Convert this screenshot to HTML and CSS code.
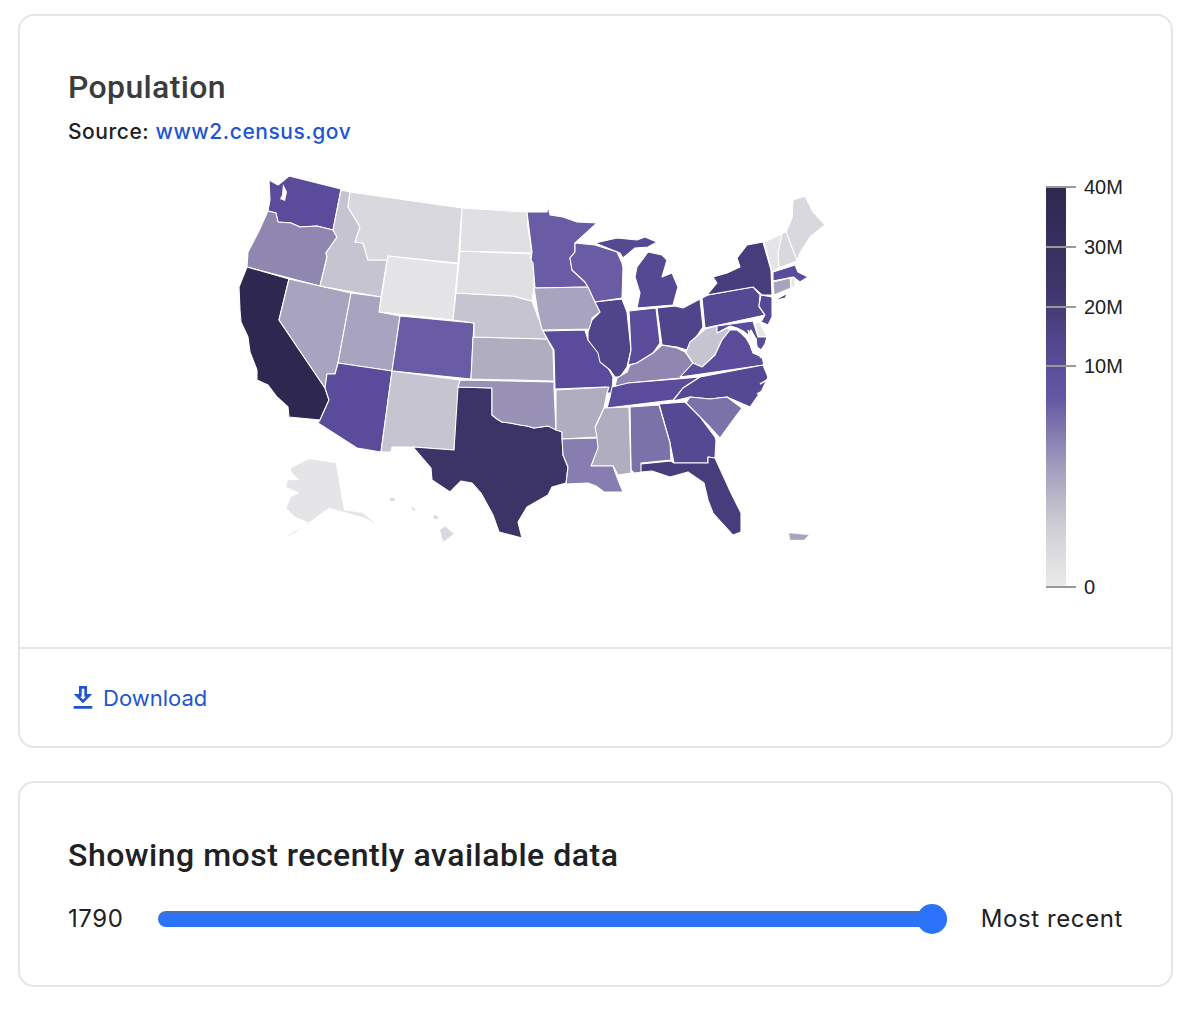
FILE: index.html
```html
<!DOCTYPE html>
<html lang="en">
<head>
<meta charset="utf-8">
<title>Population</title>
<link rel="stylesheet" href="styles.css">
</head>
<body>
<main class="page">
  <section class="card">
    <div class="card-body">
      <h2 class="title">Population</h2>
      <p class="source">Source: <a href="#" class="link">www2.census.gov</a></p>
      <div class="chart">
        <svg class="map" viewBox="220 170 620 380" width="620" height="380" aria-label="US population map">
          <g class="states">
            <polygon class="l5" points="269,180 278,185 289,176 341,189 333,230 317,226 300,227 291,223 278,222 276,213 268,211 270,200"/>
            <polygon class="l9" points="268,211 276,213 278,222 291,223 300,227 317,226 333,230 337,237 326,253 327,257 320,286 247,267 248,252 258,233"/>
            <polygon class="l0" points="247,267 289,279 279,320 325,388 329,400 320,420 289,417 288,407 277,397 268,385 257,380 257,370 250,352 248,337 241,322 240,310 239,287"/>
            <polygon class="l11" points="289,279 351,293 338,363 335,374 327,374 325,388 279,320"/>
            <polygon class="l13" points="341,190 350,192 348,207 360,227 355,242 363,243 368,260 387,260 381,297 320,286 327,257 326,253 337,237 333,230"/>
            <polygon class="l14" points="350,192 462,208 458,263 388,256 387,260 368,260 363,243 355,242 360,227 348,207"/>
            <polygon class="l16" points="388,256 458,264 453,320 379,312"/>
            <polygon class="l11" points="351,293 381,297 379,312 400,316 392,371 338,363"/>
            <polygon class="l6" points="400,316 474,323 471,379 392,371"/>
            <polygon class="l5" points="338,363 392,371 381,452 357,448 318,423 320,420 329,400 325,388 327,374 335,374"/>
            <polygon class="l13" points="392,371 460,380 454,450 413,447 392,447 391,452 381,452"/>
            <polygon class="l1" points="458,387 492,388 492,415 497,419 502,422 510,423 520,425 527,426 534,428 541,427 548,426 555,428 562,432 563,455 568,467 566,483 559,485 552,487 548,495 527,507 518,522 522,538 499,532 493,515 481,493 472,483 461,481 450,492 432,480 431,468 413,447 454,450"/>
            <polygon class="l10" points="460,380 554,382 554,388 556,430 548,426 541,427 534,428 527,426 520,425 510,423 502,422 497,419 492,415 492,388 458,387"/>
            <polygon class="l12" points="473,337 547,339 553,350 554,381 471,379"/>
            <polygon class="l13" points="456,293 513,296 520,298 532,301 538,317 547,339 474,337 474,323 453,320"/>
            <polygon class="l15" points="460,251 532,254 530,258 534,263 534,288 532,301 520,298 513,296 456,293"/>
            <polygon class="l15" points="462,208 527,212 528,228 532,253 460,251"/>
            <polygon class="l6" points="527,212 547,212 548,206 550,215 563,217 577,222 597,223 575,243 575,252 570,258 572,270 585,282 588,287 535,288 533,263 531,260 532,252"/>
            <polygon class="l11" points="534,288 588,287 600,312 592,318 592,329 542,330 538,313"/>
            <polygon class="l5" points="543,331 585,330 588,340 600,353 613,377 612,393 603,393 606,387 555,389 554,350 548,340"/>
            <polygon class="l6" points="575,243 595,245 617,252 622,263 623,268 622,298 595,302 588,287 585,282 572,270 570,258 575,252"/>
            <polygon class="l4" points="595,243 617,238 637,240 645,237 657,242 648,247 635,248 623,258 620,253"/>
            <polygon class="l4" points="648,252 662,255 667,260 662,277 672,273 678,287 673,305 637,308 640,293 635,277 637,267"/>
            <polygon class="l3" points="595,302 622,299 627,312 631,350 627,367 620,377 615,377 610,370 600,362 598,353 588,340 588,332 592,320 600,312"/>
            <polygon class="l5" points="629,311 656,308 660,343 653,353 637,363 628,365 631,350"/>
            <polygon class="l3" points="657,308 675,306 683,308 700,299 703,327 687,350 677,347 662,345"/>
            <polygon class="l9" points="662,345 677,348 685,352 693,363 680,378 628,383 627,385 615,386 617,378 627,372 630,365 637,363 653,353"/>
            <polygon class="l5" points="612,387 628,383 677,379 700,377 683,388 673,400 607,408 610,397"/>
            <polygon class="l13" points="705,329 717,326 717,333 727,328 730,330 722,340 715,355 702,367 693,363 686,352 690,342 702,332"/>
            <polygon class="l4" points="702,298 708,295 753,287 760,295 759,307 765,315 705,328"/>
            <polygon class="l2" points="707,295 717,283 713,277 727,273 740,267 737,258 747,245 763,242 771,270 772,295 762,295 753,287"/>
            <polygon class="l4" points="761,295 772,297 772,317 768,325 761,322 765,315 759,306"/>
            <polygon class="l16" points="755,322 760,323 767,337 758,337"/>
            <polygon class="l5" points="717,326 753,321 758,337 767,337 765,344 761,350 757,347 755,337 751,330 748,335 743,331 737,328 730,326 717,333"/>
            <polygon class="l5" points="730,330 737,330 742,334 746,338 750,345 753,353 762,357 764,365 680,377 693,363 702,367 715,355 722,340"/>
            <polygon class="l4" points="700,377 763,365 768,377 762,390 750,407 727,397 710,399 690,397 673,401 683,388"/>
            <polygon class="l7" points="686,403 690,397 710,399 727,397 742,408 733,420 720,438 710,427 700,417"/>
            <polygon class="l4" points="659,404 685,402 700,417 715,437 716,440 715,458 708,457 708,463 674,463 670,443"/>
            <polygon class="l7" points="630,407 659,405 670,443 671,460 641,463 643,472 634,473 631,470"/>
            <polygon class="l12" points="604,408 629,407 631,473 618,475 613,466 591,466 597,448 594,430"/>
            <polygon class="l12" points="556,390 609,387 607,393 604,408 595,427 597,437 562,439 562,432 556,430"/>
            <polygon class="l8" points="562,439 597,438 598,448 591,466 613,466 618,480 623,492 604,492 596,486 588,483 566,484 568,467 563,455"/>
            <polygon class="l2" points="641,464 671,461 674,463 708,463 708,457 715,458 731,493 741,513 741,532 733,535 722,523 713,513 708,500 704,483 688,472 670,477 652,471 641,472"/>
            <polygon class="l14" points="793,200 805,196 813,212 825,225 810,237 800,253 797,261 786,232 792,218"/>
            <polygon class="l14" points="782,233 786,232 797,261 779,268 778,253"/>
            <polygon class="l16" points="764,242 782,234 778,253 779,268 772,272"/>
            <polygon class="l5" points="773,272 795,265 798,272 808,277 800,282 793,277 773,281"/>
            <polygon class="l11" points="773,282 790,278 791,288 774,295"/>
            <polygon class="l16" points="791,278 795,278 795,286 791,288"/>
            <polygon class="l2" points="773,301 788,293 785,298"/>
          </g>
          <g class="outlying">
            <polygon class="l16" points="291,468 309,459 336,463 344,510 363,513 377,525 365,518 344,512 329,508 315,518 295,533 283,538 310,523 295,517 286,508 291,497 299,493 286,487 288,480 299,480 291,472"/>
            <polygon class="l14" points="440,530 445,526 454,534 443,542"/>
            <polygon class="l14" points="390,498 395,498 395,501 390,501"/>
            <polygon class="l14" points="411,506 416,510 413,511"/>
            <polygon class="l14" points="433,515 438,516 438,519 434,519"/>
            <polygon class="l11" points="789,533 809,535 804,540 790,540"/>
          </g>
          <path class="water" d="M283,184 L282,195 L280,199 L285,201 L287,192 Z"/>
          <path class="water-line" d="M748,330 L752,342 M756,338 L757,352 M760,358 L764,354 M767,380 L760,384 M763,391 L757,394"/>
        </svg>
        <svg class="legend" viewBox="0 0 90 430" width="90" height="430" aria-label="Legend">
          <defs>
            <linearGradient id="scale" x1="0" y1="0" x2="0" y2="1">
              <stop offset="0" stop-color="#2e2850"/>
              <stop offset="0.25" stop-color="#3f3569"/>
              <stop offset="0.45" stop-color="#5a4e9c"/>
              <stop offset="0.53" stop-color="#6558a3"/>
              <stop offset="0.7" stop-color="#a39dbd"/>
              <stop offset="0.85" stop-color="#cfced6"/>
              <stop offset="1" stop-color="#ebebeb"/>
            </linearGradient>
          </defs>
          <rect class="bar" x="6" y="17" width="20" height="400"/>
          <g class="ticks">
            <line x1="6" x2="36" y1="17" y2="17"/>
            <line x1="6" x2="36" y1="77" y2="77"/>
            <line x1="6" x2="36" y1="137" y2="137"/>
            <line x1="6" x2="36" y1="196" y2="196"/>
            <line x1="6" x2="36" y1="417" y2="417"/>
          </g>
          <g class="tick-labels">
            <text x="44" y="24">40M</text>
            <text x="44" y="84">30M</text>
            <text x="44" y="144">20M</text>
            <text x="44" y="203">10M</text>
            <text x="44" y="424">0</text>
          </g>
        </svg>
      </div>
    </div>
    <footer class="card-footer">
      <a href="#" class="download">
        <svg class="download-icon" viewBox="0 0 24 24" width="32" height="32"><path d="M19 9h-4V3H9v6H5l7 7 7-7zm-8 2V5h2v6h1.17L12 13.17 9.83 11H11zm-6 7h14v2H5v-2z"/></svg>
        <span>Download</span>
      </a>
    </footer>
  </section>
  <section class="card card-time">
    <h2 class="time-title">Showing most recently available data</h2>
    <div class="slider-row">
      <span class="slider-label">1790</span>
      <div class="slider"><span class="slider-fill"></span><span class="slider-thumb"></span></div>
      <span class="slider-label">Most recent</span>
    </div>
  </section>
</main>
</body>
</html>
```
FILE: styles.css
```css
* { box-sizing: border-box; }
html, body { margin: 0; background: #fff; }
body { font-family: Inter, "Liberation Sans", sans-serif; color: #202124; }
.page { display: flex; flex-direction: column; gap: 33px; padding: 14px 11px 0 18px; }
.card { border: 2px solid #e5e5e5; border-radius: 16px; background: #fff; }
.card-body { padding: 51px 48px 0; }
.title { margin: 0; font: 500 32px/40px Roboto, "Noto Sans", sans-serif; letter-spacing: 0.35px; color: #3c3c3c; }
.source { margin: 11px 0 0; font-size: 21px; line-height: 28px; font-weight: 500; letter-spacing: 0.55px; }
.link { color: #1f55d0; text-decoration: none; }
.chart { display: flex; justify-content: space-between; margin: 24px 0 0; padding-left: 152px; height: 477px; }
.map, .legend { display: block; flex: none; }
.legend { margin-right: -7px; margin-left: auto; }
.states polygon, .outlying polygon { stroke: #fff; stroke-width: 1.1; stroke-linejoin: round; }
.outlying polygon { stroke-width: 0.3; }
.water { fill: #fff; }
.water-line { fill: none; stroke: #fff; stroke-width: 1.5; }
.l0 { fill: #2e2750; } .l1 { fill: #3c3366; } .l2 { fill: #483d7c; } .l3 { fill: #50448b; }
.l4 { fill: #544992; } .l5 { fill: #5a4c9b; } .l6 { fill: #6a5ca4; } .l7 { fill: #7c72aa; }
.l8 { fill: #877db0; } .l9 { fill: #9087b0; } .l10 { fill: #9a92b6; } .l11 { fill: #a8a3be; }
.l12 { fill: #b0adc0; } .l13 { fill: #c6c4d0; } .l14 { fill: #d9d8de; } .l15 { fill: #e0e0e3; }
.l16 { fill: #e5e5e7; }
.bar { fill: url(#scale); }
.ticks line { stroke: #999; stroke-width: 2; }
.tick-labels text { font-family: "Liberation Sans", Arial, sans-serif; font-size: 20px; fill: #202124; }
.card-footer { border-top: 2px solid #e5e5e5; padding: 33px 44px 32px 47px; display: flex; }
.download { display: flex; align-items: center; gap: 4px; color: #1f55d0; text-decoration: none; font-size: 22px; line-height: 32px; }
.download-icon { fill: currentColor; display: block; }
.card-time { padding: 52px 48px; }
.time-title { margin: 0; font: 500 32px/40px Roboto, "Noto Sans", sans-serif; letter-spacing: 0.5px; }
.slider-row { display: flex; align-items: center; gap: 34px; margin-top: 30px; }
.slider-label { font-size: 24px; line-height: 28px; flex: none; letter-spacing: 0.6px; }
.slider { position: relative; flex: 1; height: 16px; }
.slider-fill { display: block; height: 16px; border-radius: 8px; background: #2b73f9; border-top: 2px solid #4a6fb5; }
.slider-thumb { position: absolute; right: 0; top: -7px; width: 30px; height: 30px; border-radius: 50%; background: #2b73f9; }
```
